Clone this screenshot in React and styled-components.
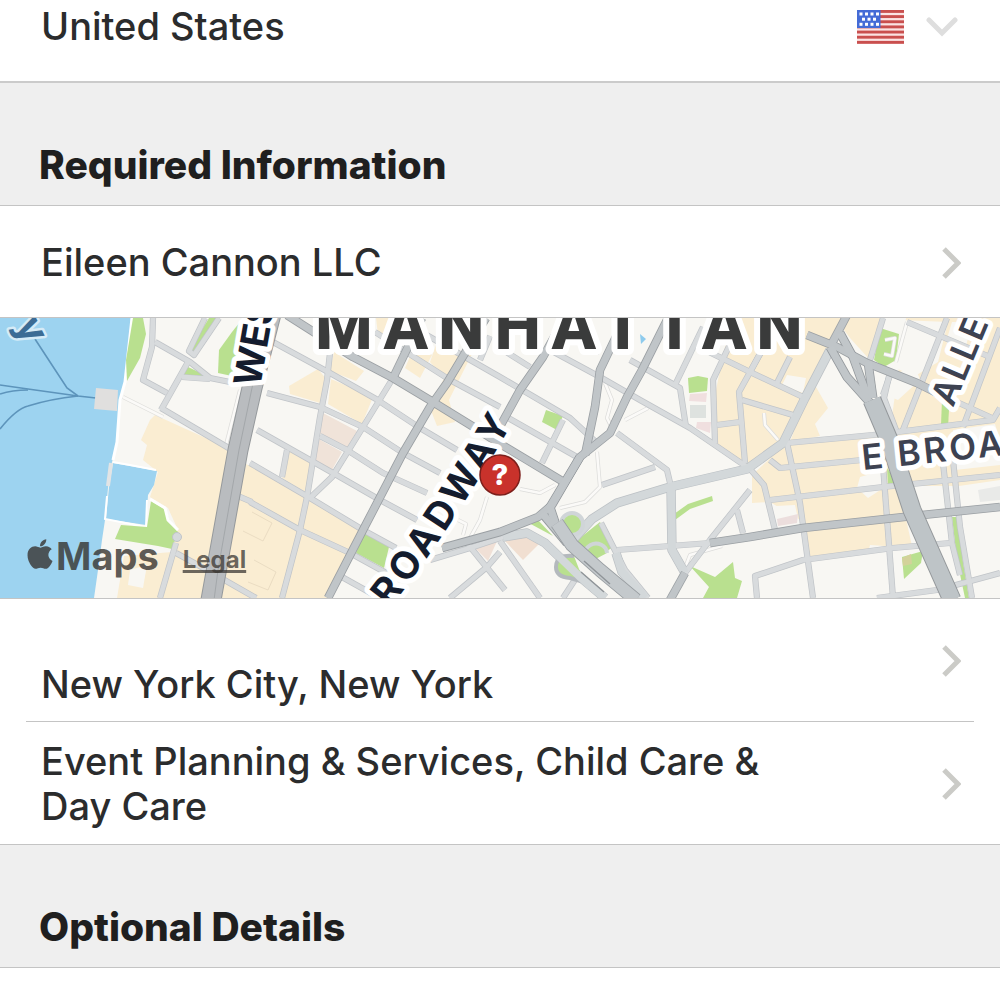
import React from "react";
import styled, { createGlobalStyle } from "styled-components";
import { FaApple } from "react-icons/fa";

const GlobalStyle = createGlobalStyle`
  *, *::before, *::after { box-sizing: border-box; }
  body {
    margin: 0;
    background: #ffffff;
    color: #2b2c2d;
    font-family: Inter, "Liberation Sans", sans-serif;
  }
  button, select { font: inherit; color: inherit; }
`;

const Form = styled.main`
  display: flex;
  flex-direction: column;
  font-size: 38px;
  font-weight: 500;
  line-height: 45px;
`;

const CountryRow = styled.div`
  display: flex;
  align-items: center;
  gap: 22px;
  padding: 4px 42px 32px 41px;
  border-bottom: 2px solid #cbcbcb;
`;

const CountrySelect = styled.select`
  flex: 1;
  min-width: 0;
  height: 45px;
  padding: 0;
  border: 0;
  background: transparent;
  appearance: none;
`;

const SectionHeader = styled.header`
  display: flex;
  align-items: flex-end;
  min-height: 123px;
  padding: 0 39px 18px;
  background: #efefef;
  border-bottom: 1px solid #c4c4c4;
`;

const SectionTitle = styled.h2`
  margin: 0;
  font-size: 39px;
  font-weight: 800;
  color: #1f1f1f;
`;

const Rows = styled.section`
  display: flex;
  flex-direction: column;
  border-bottom: 1px solid #c4c4c4;
`;

const Row = styled.button`
  display: flex;
  align-items: center;
  justify-content: space-between;
  gap: 120px;
  min-height: ${(p) => (p.$compact ? "111px" : "122px")};
  padding: 2px 39px 0 41px;
  border: 0;
  background: #ffffff;
  text-align: left;
`;

const RowLabel = styled.span`
  padding-top: ${(p) => (p.$low ? "46px" : "0")};
`;

const Divider = styled.hr`
  align-self: stretch;
  height: 1px;
  margin: 0 26px;
  border: 0;
  background: #c4c4c4;
`;

const Icon = styled.svg`
  display: block;
  flex: none;
  fill: none;
  stroke: ${(p) => p.$tone || "none"};
  stroke-width: 5;
`;

const MapFrame = styled.div`
  position: relative;
  height: 281px;
  overflow: hidden;
  border-bottom: 1px solid #c4c4c4;
`;

const MapDrawing = styled.svg`
  display: block;
  width: 100%;
  height: 280px;
`;

const Attribution = styled.div`
  position: absolute;
  left: 26px;
  bottom: 19px;
  display: flex;
  align-items: center;
  gap: 24px;
  color: rgba(52, 48, 44, 0.78);
`;

const Brand = styled.span`
  display: flex;
  align-items: center;
  gap: 2px;
  font-size: 38px;
  font-weight: 700;
  line-height: 45px;

  svg { width: 28px; height: 34px; margin-bottom: 6px; }
`;

const LegalLink = styled.a`
  font-size: 24px;
  font-weight: 700;
  line-height: 28px;
  padding-top: 6px;
  color: rgba(60, 56, 52, 0.75);
  text-decoration: underline;
  text-decoration-thickness: 3px;
  text-underline-offset: 2px;
  text-decoration-skip-ink: none;
`;

const MapLabel = styled.text`
  font-family: ${(p) => p.$family || "Inter"}, sans-serif;
  font-size: ${(p) => p.$size}px;
  font-weight: ${(p) => p.$weight || 600};
  letter-spacing: ${(p) => p.$tracking || 0}px;
  fill: ${(p) => p.$color || "#141c2e"};
  stroke: ${(p) => p.$halo || "#ffffff"};
  stroke-width: ${(p) => p.$haloWidth || 10};
  stroke-linejoin: round;
  paint-order: stroke;
`;

const ChevronRight = () => (
  <Icon width="19" height="34" viewBox="0 0 19 34" $tone="#cbcbc7" aria-hidden="true">
    <path d="M2 3 L16 17 L2 31" />
  </Icon>
);

const ChevronDown = () => (
  <Icon width="32" height="20" viewBox="0 0 32 20" $tone="#dedede" aria-hidden="true">
    <path d="M3 3 L16 16 L29 3" strokeLinecap="round" />
  </Icon>
);

const STAR_ROWS = [
  { y: 2.5, xs: [2.5, 8, 13.5, 19] },
  { y: 7.7, xs: [5, 10.5, 16] },
  { y: 12.8, xs: [2.5, 8, 13.5, 19] },
];

const Flag = () => (
  <Icon width="47" height="34" viewBox="0 0 47 34" role="img" aria-label="United States flag">
    <rect width="47" height="34" fill="#fbe3e3" />
    {[0, 1, 2, 3, 4, 5, 6].map((i) => (
      <rect key={i} y={i * 5.15} width="47" height="2.9" fill="#c94f4e" />
    ))}
    <rect width="23.5" height="18" fill="#446bd6" />
    {STAR_ROWS.flatMap((row) =>
      row.xs.map((x) => (
        <rect key={`${x}-${row.y}`} x={x} y={row.y} width="3" height="3" fill="#ffffff" />
      ))
    )}
  </Icon>
);

const BLOCKS = [
  "155,415 230,449 204,598 117,598 120,580 124,556 172,552 178,530 168,508 150,497 158,472 143,460 147,445 141,440 150,420",
  "246,464 310,498 363,530 328,598 218,598",
  "289,450 312,460 305,492 282,478",
  "289,386 318,369 327,380 320,403 290,394",
  "331,379 373,397 362,424 328,404",
  "334,352 364,371 356,381 330,371",
  "376,318 400,318 395,345 378,335",
  "415,345 432,355 420,378 405,368",
  "436,345 472,354 449,400 455,422 437,426 430,408 444,378 430,362",
  "724,350 735,318 845,318 828,354 805,400 783,443 747,467 717,445 714,400",
  "787,443 880,433 892,470 898,483 912,546 808,557 800,520 770,502 752,503 752,475",
  "805,400 812,380 828,408 815,424 820,436 790,442",
  "835,318 884,318 870,360 850,338",
  "906,318 1000,318 1000,486 905,486 890,430",
];

const OPEN_GROUND = [
  "900,320 948,322 938,362 915,376 890,366",
  "952,322 972,322 965,350 946,342",
  "900,372 915,366 920,380 898,400 888,396",
  "860,477 885,470 885,487 868,498 857,488",
  "953,430 995,424 1000,440 1000,465 955,470",
  "918,492 1000,480 1000,508 916,516",
  "787,375 806,378 803,393 782,385",
  "776,506 795,505 800,528 777,532",
  "870,545 885,546 884,551 868,553",
  "130,570 147,565 143,588 128,585",
];

const GREENS = [
  "133,318 143,318 146,334 140,358 127,381 126,360",
  "209,318 217,318 196,352 190,350",
  "186,366 209,377 183,376",
  "240,322 248,318 232,376 218,373 219,350 232,332",
  "151,501 166,510 170,522 178,532 172,549 158,546 115,539 121,525 147,527",
  "365,533 389,547 384,568 356,553",
  "546,410 563,416 557,430 542,422",
  "688,378 698,376 708,378 707,391 689,393",
  "674,514 688,504 712,496 713,501 690,509 675,520",
  "690,566 715,577 733,562 735,578 742,581 737,598 703,598 709,587",
  "600,522 615,546 589,562 576,541",
  "527,522 537,519 553,536",
  "559,562 575,574 560,574",
  "880,328 899,334 896,360 884,367 874,360",
  "942,400 949,410 948,427 941,425",
  "887,468 897,482 888,484",
  "952,517 958,517 963,562 969,598 965,598 957,560",
  "902,557 923,551 921,563 904,579",
];

const TINTS = [
  { points: "323,413 357,431 347,448 318,433", fill: "#f0e3d9" },
  { points: "317,438 342,452 332,470 312,458", fill: "#f0e3d9" },
  { points: "505,541 525,535 540,543 523,560", fill: "#f1dfd1" },
  { points: "472,545 498,539 488,561", fill: "#f0e0d6" },
  { points: "690,394 707,393 706,402 689,401", fill: "#f0dfdf" },
  { points: "690,405 706,405 706,418 690,418", fill: "#dee2df" },
  { points: "697,422 711,422 710,433 696,428", fill: "#f0dfdf" },
  { points: "777,519 798,514 797,523 778,526", fill: "#ecdedd" },
  { points: "978,490 1000,486 1000,500 980,502", fill: "#e9eae8" },
  { points: "902,558 911,554 912,564 903,566", fill: "#d3d29a" },
];

const STREETS = [
  "273,342 330,373 376,399 420,428 457,450",
  "267,393 320,407 363,427 403,453 440,473",
  "320,436 347,450 383,473 427,493",
  "257,430 333,473 380,500 417,520",
  "250,463 310,498 363,530 396,548",
  "250,502 300,530 350,553 390,575",
  "342,577 376,596",
  "330,353 327,380 320,417 307,497 300,530 282,598",
  "393,378 363,427 332,477 310,498",
  "287,450 282,477",
  "375,332 450,380 500,407",
  "423,333 500,377 570,418 597,443",
  "503,415 577,457",
  "563,420 542,463",
  "480,360 490,336",
  "500,348 530,367",
  "153,318 152,347 143,380 167,393",
  "155,342 190,362 210,378 230,382",
  "188,362 161,410",
  "182,377 210,379",
  "205,318 189,351 194,355 219,318",
  "161,408 232,450",
  "176,543 160,598",
  "176,553 207,570 256,598",
  "238,496 252,502",
  "467,543 505,590",
  "450,598 487,567 500,552",
  "430,560 470,548 503,537",
  "500,541 540,598",
  "550,350 600,377 640,400 690,428 747,467",
  "585,345 600,352",
  "630,360 680,388 686,427",
  "703,327 675,385",
  "732,340 713,380 715,443",
  "765,345 739,392 745,463",
  "717,425 740,422",
  "705,350 750,372 803,397",
  "742,400 793,415",
  "790,357 777,383",
  "762,350 750,372",
  "617,433 667,470 671,487",
  "602,485 655,467",
  "617,550 710,543",
  "750,490 710,540 685,573",
  "737,510 743,533",
  "601,523 625,570 648,598",
  "787,443 873,435 993,420 1000,408",
  "770,460 780,468 862,460",
  "770,500 883,487 1000,475",
  "787,443 800,503 813,598",
  "750,469 764,485 775,530",
  "757,598 755,576 803,560 893,548 950,543",
  "883,465 893,598",
  "943,463 952,543 960,575",
  "953,460 960,527 972,598",
  "877,598 937,590 967,582 1000,573",
  "907,322 990,357",
  "947,318 903,430",
  "890,372 884,398 896,430",
  "890,375 883,395",
  "1000,328 963,427",
  "883,318 870,360",
  "937,393 992,418",
  "563,598 580,572",
];

const WIDE_STREETS = [
  "570,543 592,519 617,503 670,487 747,469 783,443 805,398 830,350",
  "671,487 672,550 685,573",
  "503,537 527,533 545,543 580,577 605,598",
  "616,553 622,572 645,598",
];

const AVENUES = [
  "287,315 353,357 393,378 433,402 472,426 502,445 562,481",
  "486,318 447,383 430,407 403,453 363,530 328,598",
  "422,318 393,378",
  "568,312 543,357 520,390 497,432",
  "625,318 600,370 595,407 585,455",
  "672,310 642,370 627,397 610,433 580,457 552,505 538,517 500,532 442,548",
  "710,543 750,537 803,528 913,516 1000,507",
  "807,335 837,347 867,363 917,383 937,393",
  "847,315 830,347",
  "685,573 670,600",
];

const MAJORS = [
  "580,457 550,507 556,525 572,545 600,570 633,598",
  "542,513 567,543",
  "830,347 847,377 872,405",
  "840,333 853,357 868,398",
  "868,362 873,398",
];

const PATHWAYS = [
  "123,397 163,417",
  "605,383 612,400 607,418 612,428",
  "625,420 648,408",
  "597,452 600,487 585,502 560,508",
  "520,489 540,493 555,485",
  "487,497 480,520 470,538",
  "458,520 466,524 463,535",
  "764,413 765,425 778,440",
  "907,322 896,362",
  "240,390 226,445",
  "722,546 690,555 685,568",
  "885,340 895,338 892,356 884,354",
];

const OUTLINES = [
  "252,512 272,523 263,541 243,531",
  "254,560 276,572 268,590 248,582",
];

const Lines = ({ items, color, width }) => (
  <g fill="none" stroke={color} strokeWidth={width} strokeLinejoin="round">
    {items.map((points) => (
      <polyline key={points} points={points} />
    ))}
  </g>
);

const Shapes = ({ items, fill }) => (
  <g fill={fill}>
    {items.map((points) => (
      <polygon key={points} points={points} />
    ))}
  </g>
);

const CityMap = () => (
  <MapDrawing
    viewBox="0 318 1000 280"
    preserveAspectRatio="xMidYMid slice"
    role="img"
    aria-label="Map of lower Manhattan"
  >
    <rect x="0" y="318" width="1000" height="280" fill="#f8f7f3" />
    <Shapes items={BLOCKS} fill="#faedd2" />
    <Shapes items={OPEN_GROUND} fill="#f8f7f3" />

    <polygon
      points="0,318 131,318 125,382 119,410 117,442 112,462 108,488 105,520 102,540 98,570 94,598 0,598"
      fill="#9dd3f0"
    />
    <polyline points="132,318 125,382 120,400 117,442 113,460" fill="none" stroke="#ffffff" strokeWidth="3" />
    <polygon points="113,463 130,466 157,471 154,485 148,495 146,525 106,519 109,487" fill="#9dd3f0" />
    <polyline points="113,462 130,465 156,470" fill="none" stroke="#ffffff" strokeWidth="2" />
    <polyline points="111,463 108,486" fill="none" stroke="#e2e4e5" strokeWidth="4" />
    <polyline points="107,496 105,519 146,527 147,500" fill="none" stroke="#ffffff" strokeWidth="2" />

    <Shapes items={GREENS} fill="#b9e08f" />
    {TINTS.map((t) => (
      <polygon key={t.points} points={t.points} fill={t.fill} />
    ))}
    <polyline points="150,499 165,508 168,520 178,530" fill="none" stroke="#ffffff" strokeWidth="3" />

    <g fill="none" stroke="#5d94bb" strokeWidth="1.6">
      <path d="M35 339 L50 362 L67 388 L78 396 L96 398" />
      <path d="M0 385 L28 389 L78 396" />
      <path d="M0 394 Q12 390 28 390" />
      <path d="M0 429 Q16 409 28 406 Q50 399 78 396" />
    </g>
    <polygon points="96,388 118,390 117,411 94,409" fill="#e0dfde" />

    <Lines items={OUTLINES} color="#eadcc2" width={1} />
    <Lines items={PATHWAYS} color="#dcdcda" width={4} />
    <Lines items={PATHWAYS} color="#fbfaf8" width={2.6} />

    <Lines items={STREETS} color="#c0c4c8" width={6.2} />
    <Lines items={WIDE_STREETS} color="#bcc1c5" width={9.4} />
    <Lines items={STREETS} color="#d8dbdd" width={4.8} />
    <Lines items={WIDE_STREETS} color="#d3d8da" width={8} />
    <circle cx="177" cy="537" r="4.5" fill="#d5d9dc" stroke="#c0c4c8" />

    <Lines items={AVENUES} color="#9a9fa3" width={8.6} />
    <Lines items={MAJORS} color="#94999d" width={9} />
    <Lines items={AVENUES} color="#c0c5c8" width={7} />
    <Lines items={MAJORS} color="#c1c6c9" width={7.4} />

    <g fill="#b9e08f" stroke="#d0d5d8" strokeWidth="4">
      <circle cx="572" cy="524" r="11" />
      <path d="M590 562 A11 10 0 1 1 607 553" />
      <path d="M574 556 Q556 554 556 567 Q556 577 570 578 L584 582" stroke="#b4b9bd" />
    </g>
    <Lines items={["545,543 580,577 605,598"]} color="#d3d8da" width={8} />

    <Lines items={["557,523 572,545 600,570 636,600"]} color="#9a9fa3" width={14} />
    <Lines items={["557,523 572,545 600,570 636,600"]} color="#c4c9cc" width={12.4} />
    <Lines items={["584,561 610,584", "581,572 604,592"]} color="#8f9498" width={1.4} />

    <Lines items={["272,310 252,388 238,450 211,600"]} color="#95999c" width={21} />
    <Lines items={["272,310 252,388 238,450 211,600"]} color="#b9bcbf" width={19} />
    <Lines items={["270,310 252,388 239,450 218,570 214,600"]} color="#a3a7aa" width={1} />

    <Lines items={["872,400 889,440 912,510 952,600"]} color="#95999c" width={19} />
    <Lines items={["872,400 889,440 912,510 952,600"]} color="#bec4c7" width={17} />
    <path d="M640 334 l6 5 -5 5z" fill="#8ecbed" />

    <MapLabel transform="translate(20 335) rotate(64)" textAnchor="middle" $size={40} $weight={700} $color="#3c6c95" $halo="#d5ebf7" $haloWidth={5}>
      y
    </MapLabel>
    <MapLabel transform="translate(260 388) rotate(-80)" $size={38} $weight={700}>
      WES
    </MapLabel>
    <MapLabel x="315" y="349" $family="Roboto" $size={66} $weight={800} $tracking={10} $color="#3a3b3b" $haloWidth={12}>
      MANHATTAN
    </MapLabel>
    <path id="broadway-line" d="M390 608 Q457 522 530 392" fill="none" />
    <MapLabel $size={38} $weight={700} $tracking={4}>
      <textPath href="#broadway-line">ROADWAY</textPath>
    </MapLabel>
    <MapLabel transform="translate(863 470) rotate(-6)" $size={35} $tracking={3} $color="#3d4251">
      E BROA
    </MapLabel>
    <MapLabel transform="translate(953 408) rotate(-67)" $size={35} $tracking={2} $color="#3d4251">
      ALLE
    </MapLabel>

    <circle cx="500" cy="475" r="20" fill="#c9322b" stroke="#7c1f1b" strokeWidth="1.5" />
    <MapLabel x="500" y="485" textAnchor="middle" $size={29} $weight={800} $color="#ffffff" $halo="none">
      ?
    </MapLabel>
  </MapDrawing>
);

export default function App() {
  return (
    <>
      <GlobalStyle />
      <Form>
        <CountryRow>
          <CountrySelect aria-label="Country" defaultValue="us">
            <option value="us">United States</option>
          </CountrySelect>
          <Flag />
          <ChevronDown />
        </CountryRow>

        <SectionHeader>
          <SectionTitle>Required Information</SectionTitle>
        </SectionHeader>
        <Rows>
          <Row type="button" $compact>
            <RowLabel>Eileen Cannon LLC</RowLabel>
            <ChevronRight />
          </Row>
        </Rows>
        <MapFrame>
          <CityMap />
          <Attribution>
            <Brand>
              <FaApple aria-hidden="true" />
              Maps
            </Brand>
            <LegalLink href="#legal">Legal</LegalLink>
          </Attribution>
        </MapFrame>
        <Rows>
          <Row type="button">
            <RowLabel $low>New York City, New York</RowLabel>
            <ChevronRight />
          </Row>
          <Divider />
          <Row type="button">
            <RowLabel>Event Planning &amp; Services, Child Care &amp; Day Care</RowLabel>
            <ChevronRight />
          </Row>
        </Rows>

        <SectionHeader>
          <SectionTitle>Optional Details</SectionTitle>
        </SectionHeader>
      </Form>
    </>
  );
}
